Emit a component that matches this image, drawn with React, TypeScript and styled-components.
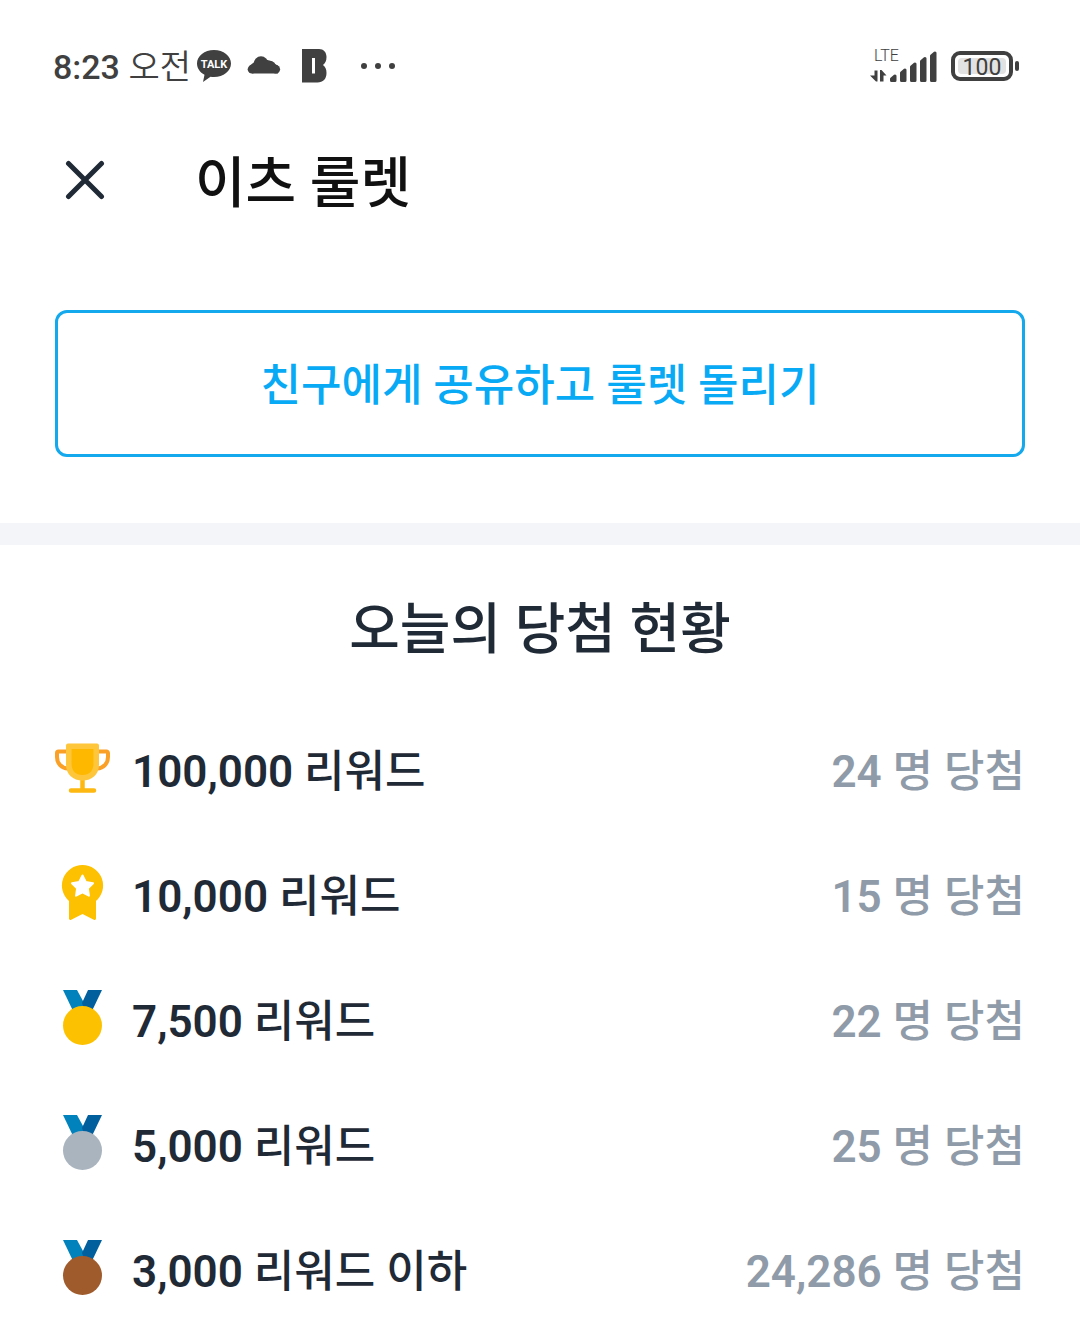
import React from "react";
import styled, { createGlobalStyle } from "styled-components";

const font = `Roboto, "Noto Sans CJK KR", sans-serif`;

const GlobalStyle = createGlobalStyle`
  *, *::before, *::after { box-sizing: border-box; }
  body { margin: 0; background: #fff; color: #1f2a36; font-family: ${font}; }
`;

const Page = styled.div`
  display: flex;
  flex-direction: column;
  width: 100%;
`;

const StatusBar = styled.div`
  display: flex;
  align-items: center;
  justify-content: space-between;
  height: 132px;
  padding: 0 61px 0 53px;
  color: #404040;
`;

const StatusGroup = styled.div<{ $gap: number }>`
  display: flex;
  align-items: center;
  gap: ${(p) => p.$gap}px;
`;

const Clock = styled.span`
  padding-top: 2px;
  font-size: 34px;
  line-height: 40px;
  font-weight: 500;
  white-space: nowrap;
`;

const Meridiem = styled.span`
  font-weight: 350;
`;

const Battery = styled.div`
  display: flex;
  align-items: center;
  gap: 2px;

  &::after {
    content: "";
    width: 4px;
    height: 10px;
    border-radius: 2px;
    background: #404040;
  }
`;

const BatteryCell = styled.div`
  display: flex;
  align-items: center;
  justify-content: center;
  width: 62px;
  height: 30px;
  padding: 3px;
  border: 4px solid #404040;
  border-radius: 9px;
`;

const BatteryLevel = styled.span`
  flex: 1;
  height: 16px;
  border-radius: 4px;
  background: #e2e2e2;
  font-size: 23px;
  line-height: 20px;
  text-align: center;
`;

const Header = styled.header`
  display: flex;
  align-items: center;
  gap: 80px;
  height: 96px;
  padding: 0 55px;
`;

const CloseButton = styled.button`
  display: flex;
  align-items: center;
  justify-content: center;
  width: 60px;
  height: 60px;
  padding: 0;
  border: 0;
  background: none;
  color: #1f2a36;
  cursor: pointer;
`;

const Title = styled.h1`
  margin: 0;
  padding-top: 6px;
  color: #111;
  font-size: 55px;
  line-height: 72px;
  font-weight: 500;
`;

const ShareSection = styled.section`
  display: flex;
  padding: 82px 55px 66px;
  border-bottom: 22px solid #f4f5f8;
`;

const ShareButton = styled.button`
  flex: 1;
  padding: 43px 20px 38px;
  border: 3px solid #14a8ec;
  border-radius: 12px;
  background: #fff;
  color: #08aaf5;
  font-family: ${font};
  font-size: 44px;
  line-height: 60px;
  font-weight: 500;
  cursor: pointer;
`;

const Results = styled.section`
  padding: 48px 55px 0;
`;

const Heading = styled.h2`
  margin: 0 0 40px;
  font-size: 55px;
  line-height: 72px;
  font-weight: 500;
  text-align: center;
`;

const PrizeList = styled.ul`
  margin: 0;
  padding: 0;
  list-style: none;
`;

const PrizeRow = styled.li`
  display: flex;
  align-items: center;
  gap: 21px;
  height: 125px;
  font-size: 44px;
  line-height: 60px;
  font-weight: 500;
  white-space: nowrap;
`;

const PrizeName = styled.span`
  flex: 1;
  padding-top: 8px;
`;

const Winners = styled.span`
  padding-top: 8px;
  color: #8f9ba8;
`;

const Figure = styled.span`
  font-weight: 600;
`;

const Icon = styled.svg`
  display: block;
  flex: none;
`;

const TalkIcon = () => (
  <Icon width="36" height="36" viewBox="0 0 36 36" aria-label="KakaoTalk">
    <path fill="#404040" d="M18 2C8.500 2 1 8 1 15.500c0 4.800 3 8.900 7.500 11.300L7 34l7.500-5.300c1.100.2 2.300.3 3.500.3 9.500 0 17-6 17-13.500S27.500 2 18 2z" />
    <text x="18" y="20" fill="#fff" fontFamily="Roboto, sans-serif" fontSize="11" fontWeight="700" textAnchor="middle">TALK</text>
  </Icon>
);

const CloudIcon = () => (
  <Icon width="34" height="36" viewBox="0 0 34 36" fill="#404040" aria-hidden="true">
    <circle cx="5" cy="21.300" r="4.300" />
    <circle cx="14" cy="15.500" r="7.200" />
    <circle cx="23" cy="18.500" r="5.800" />
    <circle cx="28.800" cy="21.300" r="4.300" />
    <path d="M2.500 17.800L8 13.500l11-2 4 1.200 8 5v7.900H5z" />
  </Icon>
);

const BIcon = () => (
  <Icon width="26" height="36" viewBox="0 0 26 36" aria-hidden="true">
    <path fill="#404040" fillRule="evenodd" d="M1 1h17c4.500 0 7.500 3 7.500 8 0 4-1.200 6.200-3.500 8 2.300 1.800 3.500 4 3.500 8 0 6-3.500 9.500-9 9.500H1zM11 10v15.500h3V10z" />
  </Icon>
);

const MoreIcon = () => (
  <Icon width="36" height="36" viewBox="0 0 36 36" fill="#404040" aria-hidden="true">
    <circle cx="4" cy="18" r="3" />
    <circle cx="18" cy="18" r="3" />
    <circle cx="32" cy="18" r="3" />
  </Icon>
);

const SignalIcon = () => (
  <Icon width="68" height="44" viewBox="0 -4 68 44" fill="#404040" aria-label="LTE signal">
    <text x="4" y="13" fontFamily="Roboto, sans-serif" fontSize="16" fontWeight="300">LTE</text>
    <path d="M4.500 22.500h3V33.500H6L0 27.500h4.500zM10 22h1.500l5 5.500h-3V33.500H10z" />
    <g stroke="#404040" strokeWidth="3" strokeLinejoin="round">
      <path d="M21.500 32.500v-1.500l3.500-3V32.500z" />
      <path d="M31.500 32.500v-7.500l3.500-3V32.500z" />
      <path d="M41.500 32.500v-13.500l3.500-3V32.500z" />
      <path d="M51.500 32.500v-19l3.500-3V32.500z" />
      <path d="M61.500 32.500v-24.500l3.500-3V32.500z" />
    </g>
  </Icon>
);

const CloseIcon = () => (
  <Icon width="40" height="40" viewBox="0 0 40 40" fill="none" stroke="currentColor" strokeWidth="5" strokeLinecap="round" aria-hidden="true">
    <path d="M3.500 3.500l33 33M36.500 3.500l-33 33" />
  </Icon>
);

const TrophyIcon = () => (
  <Icon width="56" height="56" viewBox="0 0 56 56" fill="none" aria-hidden="true">
    <path d="M12 11.500H3.500a1.500 1.500 0 0 0-1.500 1.500V17c0 6 4 11 11 11.500M43 11.500h8.500a1.500 1.500 0 0 1 1.500 1.500V17c0 6-4 11-11 11.500" stroke="#fba026" strokeWidth="4" />
    <path d="M27.500 38v12M16 50.500h23" stroke="#fdb912" strokeWidth="4.500" strokeLinecap="round" />
    <path d="M11 5.500a2 2 0 0 1 2-2h29a2 2 0 0 1 2 2v19c0 10-7 16-16.500 16S11 34.500 11 24.500z" fill="#fec63a" />
    <path d="M16.500 9h22V23.500c0 7-4 11.500-11 11.500S16.500 30.500 16.500 23.500z" fill="#ffb800" />
  </Icon>
);

const RosetteIcon = () => (
  <Icon width="56" height="56" viewBox="0 0 56 56" aria-hidden="true">
    <path fill="#fdc101" d="M27.500 0A20.500 20.500 0 0 1 41 36v17.500a1.500 1.500 0 0 1-2.200 1.300L27.500 49l-11.300 5.800a1.500 1.500 0 0 1-2.200-1.300V36A20.500 20.500 0 0 1 27.500 0z" />
    <path fill="#fff" stroke="#fff" strokeWidth="2" strokeLinejoin="round" d="M27.500 10.500l3.300 6.500 7.200 1.200-5.100 5.200 1 7.300-6.400-3.300-6.400 3.300 1-7.300-5.100-5.200 7.200-1.200z" />
  </Icon>
);

const MedalIcon = ({ color }: { color: string }) => (
  <Icon width="56" height="56" viewBox="0 0 56 56" aria-hidden="true">
    <path fill="#0282bd" d="M8 0h14l6 11 5 11-14 1z" />
    <path fill="#005f9c" d="M33 0h14L36 23l-6-1-3-9z" />
    <circle cx="27.500" cy="35.500" r="19.500" fill={color} />
  </Icon>
);

const prizes = [
  { amount: "100,000", label: "리워드", winners: "24", icon: <TrophyIcon /> },
  { amount: "10,000", label: "리워드", winners: "15", icon: <RosetteIcon /> },
  { amount: "7,500", label: "리워드", winners: "22", icon: <MedalIcon color="#fcc201" /> },
  { amount: "5,000", label: "리워드", winners: "25", icon: <MedalIcon color="#a9b4bf" /> },
  { amount: "3,000", label: "리워드 이하", winners: "24,286", icon: <MedalIcon color="#a05b2c" /> },
];

export default function App() {
  return (
    <Page>
      <GlobalStyle />
      <StatusBar>
        <StatusGroup $gap={20}>
          <StatusGroup $gap={15}>
            <StatusGroup $gap={5}>
              <Clock>
                8:23 <Meridiem>오전</Meridiem>
              </Clock>
              <TalkIcon />
            </StatusGroup>
            <CloudIcon />
          </StatusGroup>
          <StatusGroup $gap={33}>
            <BIcon />
            <MoreIcon />
          </StatusGroup>
        </StatusGroup>
        <StatusGroup $gap={13}>
          <SignalIcon />
          <Battery>
            <BatteryCell>
              <BatteryLevel>100</BatteryLevel>
            </BatteryCell>
          </Battery>
        </StatusGroup>
      </StatusBar>
      <Header>
        <CloseButton type="button" aria-label="닫기">
          <CloseIcon />
        </CloseButton>
        <Title>이츠 룰렛</Title>
      </Header>
      <main>
        <ShareSection>
          <ShareButton type="button">친구에게 공유하고 룰렛 돌리기</ShareButton>
        </ShareSection>
        <Results>
          <Heading>오늘의 당첨 현황</Heading>
          <PrizeList>
            {prizes.map((p) => (
              <PrizeRow key={p.amount}>
                {p.icon}
                <PrizeName>
                  <Figure>{p.amount}</Figure> {p.label}
                </PrizeName>
                <Winners>
                  <Figure>{p.winners}</Figure> 명 당첨
                </Winners>
              </PrizeRow>
            ))}
          </PrizeList>
        </Results>
      </main>
    </Page>
  );
}
